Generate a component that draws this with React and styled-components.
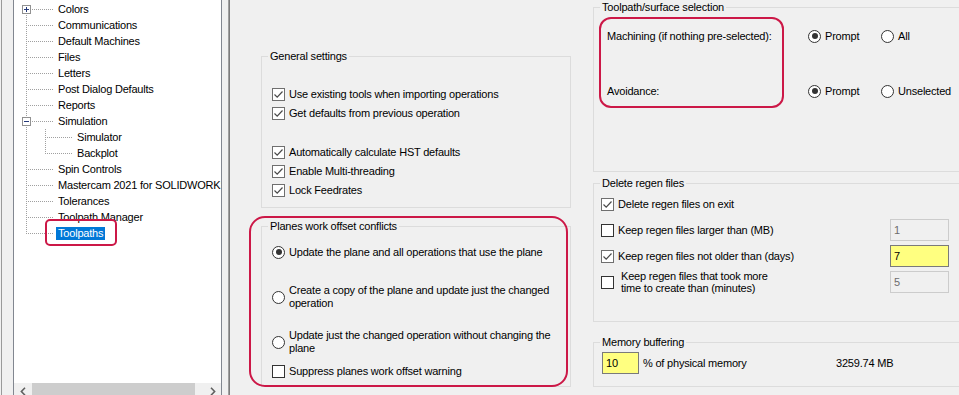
import React from "react"
import styled, { createGlobalStyle, css } from "styled-components"

const RED = "#cc1847"
const DOT = "#a0a0a0"

const GlobalStyle = createGlobalStyle`
  html, body { margin: 0; padding: 0; }
  body {
    background: #f0f0f0;
    font-family: "Liberation Sans", Arial, sans-serif;
    font-size: 11px;
    letter-spacing: -0.2px;
    color: #000;
  }
  * { box-sizing: border-box; }
`

const treeItems = [
    { label: "Colors", toggle: "plus", line: "first" },
    { label: "Communications" },
    { label: "Default Machines" },
    { label: "Files" },
    { label: "Letters" },
    { label: "Post Dialog Defaults" },
    { label: "Reports" },
    { label: "Simulation", toggle: "minus" },
    { label: "Simulator", level: 1 },
    { label: "Backplot", level: 1, line: "last" },
    { label: "Spin Controls" },
    { label: "Mastercam 2021 for SOLIDWORKS" },
    { label: "Tolerances" },
    { label: "Toolpath Manager" },
    { label: "Toolpaths", line: "last", selected: true },
]

function CheckBox({ checked }) {
    return (
        <Box $checked={checked}>
            {checked && (
                <svg width="11" height="11" viewBox="0 0 11 11">
                    <path d="M1.5 5.5 L4.2 8.2 L9.5 2.5" fill="none" stroke="#4a4a4a" strokeWidth="1.2" />
                </svg>
            )}
        </Box>
    )
}

function Chevron({ dir }) {
    return (
        <svg width="6" height="9" viewBox="0 0 6 9">
            <path d={dir === "left" ? "M5 0.8 L1.4 4.5 L5 8.2" : "M1 0.8 L4.6 4.5 L1 8.2"} fill="none" stroke="#606060" strokeWidth="1.6" />
        </svg>
    )
}

export default function App() {
    return (
        <Window>
            <GlobalStyle />
            <LeftPane>
                <TreePanel>
                    <TreeList>
                        {treeItems.map((item) => (
                            <TreeRow key={item.label}>
                                {item.level === 1 && <Guide />}
                                <Branch $line={item.line || "full"}>
                                    {item.toggle && <Toggle $plus={item.toggle === "plus"} />}
                                </Branch>
                                <TreeLabel $selected={item.selected}>{item.label}</TreeLabel>
                            </TreeRow>
                        ))}
                    </TreeList>
                    <HScroll>
                        <ScrollButton><Chevron dir="left" /></ScrollButton>
                        <ScrollThumb />
                        <ScrollTrack />
                        <ScrollButton><Chevron dir="right" /></ScrollButton>
                    </HScroll>
                </TreePanel>
            </LeftPane>
            <Splitter />

            <Content>
                <LeftColumn>
                    <Group>
                        <Legend>General settings</Legend>
                        <GeneralBody>
                            <CheckRow><CheckBox checked /><OptionText>Use existing tools when importing operations</OptionText></CheckRow>
                            <CheckRow><CheckBox checked /><OptionText>Get defaults from previous operation</OptionText></CheckRow>
                            <CheckRow $gap={20}><CheckBox checked /><OptionText>Automatically calculate HST defaults</OptionText></CheckRow>
                            <CheckRow><CheckBox checked /><OptionText>Enable Multi-threading</OptionText></CheckRow>
                            <CheckRow><CheckBox checked /><OptionText>Lock Feedrates</OptionText></CheckRow>
                        </GeneralBody>
                    </Group>

                    <Flagged>
                        <Group>
                            <Legend>Planes work offset conflicts</Legend>
                            <PlanesBody>
                                <OptionRow><Radio $checked /><OptionText $wrap>Update the plane and all operations that use the plane</OptionText></OptionRow>
                                <OptionRow><Radio /><OptionText $wrap>Create a copy of the plane and update just the changed operation</OptionText></OptionRow>
                                <OptionRow><Radio /><OptionText $wrap>Update just the changed operation without changing the plane</OptionText></OptionRow>
                                <CheckRow $gap={4}><CheckBox /><OptionText>Suppress planes work offset warning</OptionText></CheckRow>
                            </PlanesBody>
                        </Group>
                    </Flagged>
                </LeftColumn>

                <RightColumn>
                    <Group>
                        <Legend>Toolpath/surface selection</Legend>
                        <SelectionGrid>
                            <Note />
                            <FieldLabel $row={1}>Machining (if nothing pre-selected):</FieldLabel>
                            <Choice $row={1} $col={2}><Radio $checked /><span>Prompt</span></Choice>
                            <Choice $row={1} $col={3}><Radio /><span>All</span></Choice>
                            <FieldLabel $row={2}>Avoidance:</FieldLabel>
                            <Choice $row={2} $col={2}><Radio $checked /><span>Prompt</span></Choice>
                            <Choice $row={2} $col={3}><Radio /><span>Unselected</span></Choice>
                        </SelectionGrid>
                    </Group>

                    <Group $gap={5}>
                        <Legend>Delete regen files</Legend>
                        <RegenGrid>
                            <CheckRow $span><CheckBox checked /><OptionText>Delete regen files on exit</OptionText></CheckRow>
                            <CheckRow><CheckBox /><OptionText>Keep regen files larger than (MB)</OptionText></CheckRow>
                            <TextBox $w={59} $variant="disabled" value="1" readOnly />
                            <CheckRow><CheckBox checked /><OptionText>Keep regen files not older than (days)</OptionText></CheckRow>
                            <TextBox $w={59} $variant="yellow" value="7" readOnly />
                            <CheckRow><CheckBox /><OptionText $indent $tight>Keep regen files that took more time to create than (minutes)</OptionText></CheckRow>
                            <TextBox $w={59} $variant="disabled" value="5" readOnly />
                        </RegenGrid>
                    </Group>

                    <Group $gap={14}>
                        <Legend>Memory buffering</Legend>
                        <MemoryRow>
                            <TextBox $w={37} $variant="yellow" value="10" readOnly />
                            <MemoryText>% of physical memory</MemoryText>
                            <span>3259.74 MB</span>
                        </MemoryRow>
                    </Group>
                </RightColumn>
            </Content>
        </Window>
    )
}

const Window = styled.div`
    display: flex;
    width: 959px;
    height: 395px;
    overflow: hidden;
    background: #f0f0f0;
`
const LeftPane = styled.div`
    flex: none;
    margin-left: 1px;
    border-left: 1px solid #9a9a9a;
    padding: 0 6px 0 11px;
    height: 100%;
`
const TreePanel = styled.div`
    width: 209px;
    height: 400px;
    background: #fff;
    border-left: 1px solid #828790;
    border-right: 1px solid #828790;
    display: flex;
    flex-direction: column;
    overflow: hidden;
`
const TreeList = styled.div`
    flex: 1;
    padding-top: 1px;
`
const TreeRow = styled.div`
    display: flex;
    align-items: center;
    height: 16px;
`
const vLine = `repeating-linear-gradient(to bottom, ${DOT} 0 1px, transparent 1px 2px)`
const hLine = `repeating-linear-gradient(to right, ${DOT} 0 1px, transparent 1px 2px)`
const Guide = styled.span`
    flex: none;
    align-self: stretch;
    width: 19px;
    margin-left: 12px;
    background: ${vLine} 0 0 / 1px 100% no-repeat;
`
const Branch = styled.span`
    flex: none;
    align-self: stretch;
    display: flex;
    align-items: center;
    width: 27px;
    margin-left: 12px;
    ${Guide} + & { margin-left: 0; }
    background:
        ${hLine} 0 8px / 100% 1px no-repeat,
        ${({ $line }) => {
            if ($line === "first") {
                return `${vLine} 0 8px / 1px 8px no-repeat`
            } else if ($line === "last") {
                return `${vLine} 0 0 / 1px 9px no-repeat`
            } else {
                return `${vLine} 0 0 / 1px 100% no-repeat`
            }
        }};
`
const Toggle = styled.span`
    width: 9px;
    height: 9px;
    margin-left: -4px;
    margin-top: 1px;
    border: 1px solid #919191;
    background:
        ${({ $plus }) => $plus ? "linear-gradient(#25397a, #25397a) center / 1px 5px no-repeat," : ""}
        linear-gradient(#25397a, #25397a) center / 5px 1px no-repeat,
        #fff;
`
const TreeLabel = styled.span`
    position: relative;
    margin-left: 3px;
    padding: 0 2px;
    line-height: 13px;
    white-space: nowrap;
    ${({ $selected }) => $selected && css`
        background: #0078d7;
        color: #fff;
        &::after {
            content: "";
            position: absolute;
            left: -11px;
            right: -12px;
            top: -8px;
            bottom: -6px;
            border: 2px solid ${RED};
            border-radius: 5px;
        }
    `}
`
const HScroll = styled.div`
    flex: none;
    height: 17px;
    display: flex;
    background: #f0f0f0;
`
const ScrollButton = styled.div`
    width: 17px;
    display: flex;
    align-items: center;
    justify-content: center;
`
const ScrollThumb = styled.div`
    width: 163px;
    margin-left: 1px;
    background: #cdcdcd;
`
const ScrollTrack = styled.div`
    flex: 1;
`
const Splitter = styled.div`
    flex: none;
    width: 2px;
    height: 100%;
    background: #7d7d7d;
    border-left: 1px solid #a0a0a0;
`
const Content = styled.div`
    flex: 1;
    display: flex;
    min-width: 0;
`
const LeftColumn = styled.div`
    flex: none;
    width: 341px;
    padding: 50px 0 0 31px;
    display: flex;
    flex-direction: column;
`
const RightColumn = styled.div`
    flex: none;
    width: 380px;
    margin-left: 22px;
    padding-top: 1px;
    display: flex;
    flex-direction: column;
`
const Group = styled.fieldset`
    margin: ${({ $gap }) => $gap || 0}px 0 0 0;
    padding: 0;
    min-width: 0;
    width: 100%;
    border: 1px solid #dcdcdc;
`
const Legend = styled.legend`
    margin-left: 6px;
    padding: 0 2px;
    line-height: 13px;
`
const GeneralBody = styled.div`
    display: flex;
    flex-direction: column;
    padding: 22px 0 7px 10px;
`
const PlanesBody = styled.div`
    display: flex;
    flex-direction: column;
    gap: 13px;
    padding: 3px 0 5px 10px;
`
const Flagged = styled.div`
    position: relative;
    margin-top: 12px;
    &::after {
        content: "";
        position: absolute;
        top: -4px;
        left: -12px;
        right: 3px;
        bottom: 0;
        border: 2px solid ${RED};
        border-radius: 16px;
        pointer-events: none;
    }
`
const CheckRow = styled.div`
    display: flex;
    align-items: center;
    height: 19px;
    grid-column: ${({ $span }) => $span ? "1 / -1" : "1"};
    ${PlanesBody} > & { margin-top: ${({ $gap }) => $gap ? $gap - 13 : 0}px; }
    ${GeneralBody} > & { margin-top: ${({ $gap }) => $gap || 0}px; }
`
const OptionRow = styled.div`
    display: flex;
    align-items: center;
    height: 32px;
`
const Box = styled.span`
    flex: none;
    width: 13px;
    height: 13px;
    margin-right: 4px;
    border: 1px solid ${({ $checked }) => $checked ? "#6f6f6f" : "#333"};
    background: #fff;
    display: flex;
    align-items: center;
    justify-content: center;
`
const Radio = styled.span`
    flex: none;
    width: 13px;
    height: 13px;
    margin-right: 4px;
    border-radius: 50%;
    border: 1px solid #333;
    background: #fff;
    display: flex;
    align-items: center;
    justify-content: center;
    &::after {
        content: "";
        width: 6px;
        height: 6px;
        border-radius: 50%;
        background: #333;
        display: ${({ $checked }) => $checked ? "block" : "none"};
    }
`
const OptionText = styled.span`
    line-height: ${({ $tight }) => $tight ? 12 : 13}px;
    white-space: ${({ $wrap, $tight }) => $wrap || $tight ? "normal" : "nowrap"};
    max-width: ${({ $wrap, $tight }) => $tight ? "155px" : $wrap ? "270px" : "none"};
    margin-left: ${({ $indent }) => $indent ? 3 : 0}px;
`
const SelectionGrid = styled.div`
    display: grid;
    grid-template-columns: 201px 73px auto;
    grid-template-rows: 20px 20px;
    row-gap: 35px;
    align-items: center;
    padding: 12px 0 70px 13px;
`
const Note = styled.div`
    grid-area: 1 / 1 / 3 / 2;
    align-self: stretch;
    margin: -9px 24px -7px -8px;
    border: 2px solid ${RED};
    border-radius: 12px;
    pointer-events: none;
`
const FieldLabel = styled.span`
    grid-row: ${({ $row }) => $row};
    grid-column: 1;
    white-space: nowrap;
`
const Choice = styled.div`
    grid-row: ${({ $row }) => $row};
    grid-column: ${({ $col }) => $col};
    display: flex;
    align-items: center;
    white-space: nowrap;
`
const RegenGrid = styled.div`
    display: grid;
    grid-template-columns: 289px 59px;
    grid-auto-rows: 22px;
    row-gap: 4px;
    align-items: center;
    padding: 3px 0 28px 7px;
`
const TextBox = styled.input`
    width: ${({ $w }) => $w}px;
    height: 22px;
    margin: 0;
    padding: 0 2px 0 3px;
    font: inherit;
    letter-spacing: inherit;
    outline: none;
    border: 1px solid ${({ $variant }) => $variant === "yellow" ? "#7a7a7a" : "#cccccc"};
    background: ${({ $variant }) => $variant === "yellow" ? "#ffff80" : "#f0f0f0"};
    color: ${({ $variant }) => $variant === "yellow" ? "#000" : "#6d6d6d"};
`
const MemoryRow = styled.div`
    display: flex;
    align-items: center;
    padding: 3px 0 12px 8px;
    white-space: nowrap;
`
const MemoryText = styled.span`
    width: 193px;
    margin-left: 4px;
`
